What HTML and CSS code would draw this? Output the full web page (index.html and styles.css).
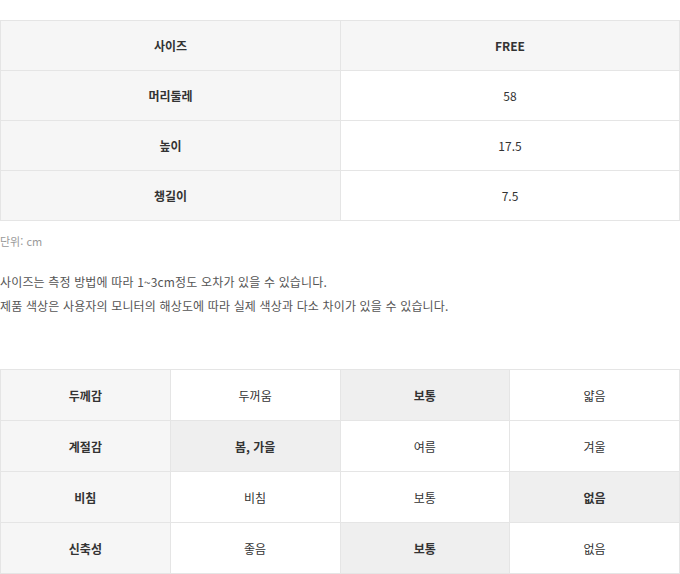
FILE: index.html
```html
<!DOCTYPE html>
<html lang="ko">
<head>
<meta charset="utf-8">
<link rel="stylesheet" href="styles.css">
</head>
<body>
<div class="page">
  <table class="size-table">
    <tr class="head"><th>사이즈</th><td>FREE</td></tr>
    <tr><th>머리둘레</th><td>58</td></tr>
    <tr><th>높이</th><td>17.5</td></tr>
    <tr><th>챙길이</th><td>7.5</td></tr>
  </table>
  <p class="unit">단위: cm</p>
  <div class="notes">
    <p>사이즈는 측정 방법에 따라 1~3cm정도 오차가 있을 수 있습니다.</p>
    <p>제품 색상은 사용자의 모니터의 해상도에 따라 실제 색상과 다소 차이가 있을 수 있습니다.</p>
  </div>
  <table class="info-table">
    <tr><th>두께감</th><td>두꺼움</td><td class="on">보통</td><td>얇음</td></tr>
    <tr><th>계절감</th><td class="on">봄, 가을</td><td>여름</td><td>겨울</td></tr>
    <tr><th>비침</th><td>비침</td><td>보통</td><td class="on">없음</td></tr>
    <tr><th>신축성</th><td>좋음</td><td class="on">보통</td><td>없음</td></tr>
  </table>
</div>
</body>
</html>
```
FILE: styles.css
```css
html, body {
  margin: 0;
  padding: 0;
  background: #fff;
}
body {
  font-family: "Noto Sans CJK KR", "Noto Sans", sans-serif;
  color: #333;
}
.page {
  width: 680px;
  padding-top: 20px;
}
table {
  width: 680px;
  border-collapse: collapse;
  table-layout: fixed;
}
th, td {
  border: 1px solid #e5e5e5;
  text-align: center;
  vertical-align: middle;
  font-size: 12px;
  padding: 0;
  color: #333;
}
th {
  font-weight: bold;
  background: #f6f6f6;
}
.size-table th, .size-table td {
  height: 49px;
}
.size-table th {
  width: 339px;
}
.size-table .head td {
  background: #f6f6f6;
  font-weight: bold;
}
.info-table th, .info-table td {
  height: 50px;
}
.info-table td.on {
  background: #efefef;
  font-weight: bold;
}
.unit {
  margin: 12px 0 0 0;
  font-size: 11px;
  color: #999;
  line-height: 16px;
}
.notes {
  margin-top: 21px;
}
.notes p {
  margin: 0;
  font-size: 12px;
  letter-spacing: 0.15px;
  line-height: 24px;
  color: #555;
}
.info-table {
  margin-top: 51px;
}
```
